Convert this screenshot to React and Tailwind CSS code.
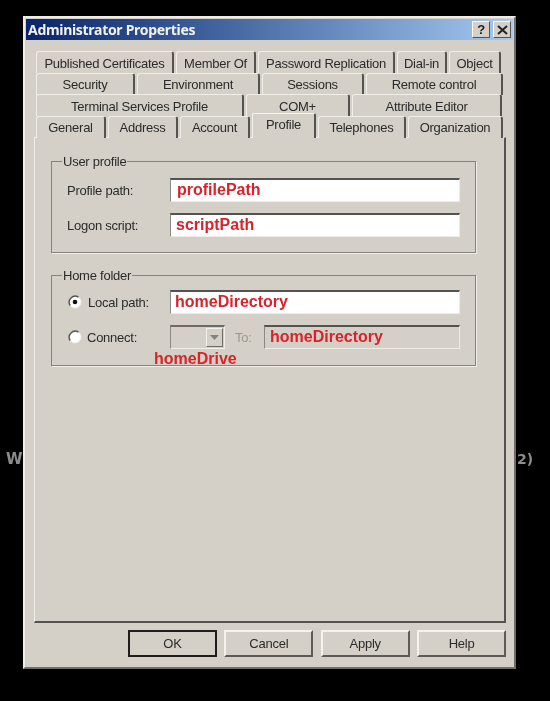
const rows = [
  [["Published Certificates", 138], ["Member Of", 80], ["Password Replication", 137], ["Dial-in", 50], ["Object", 52]],
  [["Security", 99], ["Environment", 123], ["Sessions", 102], ["Remote control", 137]],
  [["Terminal Services Profile", 208], ["COM+", 104], ["Attribute Editor", 150]],
  [["General", 70], ["Address", 70], ["Account", 70], ["Profile", 64, true], ["Telephones", 88], ["Organization", 95]],
];

function Tab({ label, width, active }) {
  return (
    <div
      style={{ width }}
      className={
        active
          ? "relative z-10 -mt-[3px] -mb-[1px] flex h-[25px] shrink-0 items-start justify-center rounded-t-[2px] border-t border-l border-r-2 border-t-[#f4f2ec] border-l-[#f4f2ec] border-r-[#55534f] bg-[#d4d0c8] pt-[4px] text-[#2b2b2b]"
          : "flex h-[22px] shrink-0 items-center justify-center rounded-t-[3px] border-t border-l border-r-2 border-t-[#f0eee8] border-l-[#f0eee8] border-r-[#55534f] bg-[#d4d0c8] pt-[1px] text-[#2b2b2b]"
      }
    >
      {label}
    </div>
  );
}

function Field({ text, width, disabled, pad = "pl-[4px]" }) {
  return (
    <div
      style={{ width }}
      className={`flex h-[24px] shrink-0 items-center border-t-2 border-l border-r border-b border-t-[#55534f] border-l-[#8b8984] border-r-[#eeece6] border-b-[#eeece6] pb-[1px] ${pad} text-[16px] font-bold tracking-normal text-[#d8232a] ${disabled ? "bg-[#d4d0c8]" : "bg-white"}`}
    >
      {text}
    </div>
  );
}

function Radio({ checked }) {
  return (
    <svg width="14" height="14" viewBox="0 0 14 14" className="shrink-0">
      <circle cx="7" cy="7" r="6" fill="#fff" stroke="#f0eee8" />
      <path d="M2.2 10.5A6 6 0 0 1 10.5 2.2" fill="none" stroke="#55534f" strokeWidth="1.4" />
      {checked && <circle cx="7" cy="7" r="2.3" fill="#111" />}
    </svg>
  );
}

function Group({ title, className, children }) {
  return (
    <fieldset className={`ml-[16px] w-[425px] border border-[#85837e] pb-0 pl-0 pr-0 pt-0 shadow-[1px_1px_0_#f0eee8] ${className}`}>
      <legend className="ml-[10px] px-[1px] text-[#2b2b2b]">{title}</legend>
      {children}
    </fieldset>
  );
}

function Button({ label, primary, width = 89 }) {
  return (
    <div
      style={{ width }}
      className={
        primary
          ? "flex h-[27px] shrink-0 items-center justify-center border-2 border-[#1f1e1c] bg-[#d4d0c8] text-[#2b2b2b]"
          : "flex h-[27px] shrink-0 items-center justify-center border-t-2 border-l-2 border-r-2 border-b-2 border-t-[#f4f2ec] border-l-[#f4f2ec] border-r-[#5d5b56] border-b-[#5d5b56] bg-[#d4d0c8] text-[#2b2b2b]"
      }
    >
      {label}
    </div>
  );
}

export default function App() {
  return (
    <div className="flex h-[701px] w-[550px] overflow-hidden bg-black pt-[16px] font-['Liberation_Sans',sans-serif] text-[13px] leading-none tracking-[-0.25px] blur-[0.45px]">
      <div className="w-[23px] shrink-0 pl-[6px] pt-[436px] font-['DejaVu_Sans',sans-serif] text-[15px] font-bold tracking-normal text-[#8d8d8d]">W</div>

      <div className="h-[653px] w-[493px] shrink-0 border-t-2 border-l-2 border-r-2 border-b-2 border-t-[#eeece6] border-l-[#eeece6] border-r-[#6f6d68] border-b-[#6f6d68] bg-[#d4d0c8] p-[1px]">
        <div className="flex h-[21px] items-center justify-between bg-gradient-to-r from-[#0a246a] to-[#a6caf0] pl-[2px] pr-[2px]">
          <span className="font-['Noto_Sans',sans-serif] text-[14px] font-bold tracking-[-0.3px] text-[#f2f2f2]">Administrator Properties</span>
          <div className="flex gap-[3px]">
            <div className="flex h-[17px] w-[18px] items-center justify-center border border-t-[#fff] border-l-[#fff] border-r-[#55534f] border-b-[#55534f] bg-[#d4d0c8] text-[13px] font-bold text-[#222]">?</div>
            <div className="flex h-[17px] w-[18px] items-center justify-center border border-t-[#fff] border-l-[#fff] border-r-[#55534f] border-b-[#55534f] bg-[#d4d0c8] text-[#222]">
              <svg width="11" height="10" viewBox="0 0 11 10"><path d="M1 1l9 8M10 1l-9 8" stroke="#222" strokeWidth="2" /></svg>
            </div>
          </div>
        </div>

        <div className="pl-[8px] pr-[7px] pt-[11px]">
          <div className="flex flex-col pl-[2px]">
            {rows.map((row, i) => (
              <div key={i} className="flex h-[21.5px] gap-[2px]">
                {row.map(([label, w, active]) => (
                  <Tab key={label} label={label} width={w} active={active} />
                ))}
              </div>
            ))}
          </div>

          <div className="h-[486px] w-[472px] border-t border-l border-r-2 border-b-2 border-t-[#f0eee8] border-l-[#f0eee8] border-r-[#55534f] border-b-[#55534f] pt-[17px]">
            <Group title="User profile" className="h-[98px]">
              <div className="mt-[10px] flex h-[24px] items-center pl-[15px]">
                <span className="w-[103px] text-[#2b2b2b]">Profile path:</span>
                <Field text="profilePath" width={290} pad="pl-[6px]" />
              </div>
              <div className="mt-[11px] flex h-[24px] items-center pl-[15px]">
                <span className="w-[103px] text-[#2b2b2b]">Logon script:</span>
                <Field text="scriptPath" width={290} pad="pl-[5px]" />
              </div>
            </Group>

            <Group title="Home folder" className="mt-[16px] h-[97px]">
              <div className="mt-[8px] flex h-[24px] items-center pl-[16px]">
                <Radio checked />
                <span className="ml-[6px] w-[82px] text-[#2b2b2b]">Local path:</span>
                <Field text="homeDirectory" width={290} />
              </div>
              <div className="mt-[11px] flex h-[24px] items-center pl-[16px]">
                <Radio />
                <span className="ml-[5px] w-[83px] text-[#2b2b2b]">Connect:</span>
                <div className="flex h-[24px] w-[55px] shrink-0 items-center justify-end border-t-2 border-l border-r border-b border-t-[#6d6b66] border-l-[#8b8984] border-r-[#f0eee8] border-b-[#f0eee8] pr-[1px]">
                  <div className="flex h-[19px] w-[17px] items-center justify-center border border-t-[#f4f2ec] border-l-[#f4f2ec] border-r-[#6d6b66] border-b-[#6d6b66]">
                    <svg width="9" height="5" viewBox="0 0 9 5"><path d="M0 0h9L4.500 5z" fill="#85837e" /></svg>
                  </div>
                </div>
                <span className="ml-[10px] w-[29px] text-[#9a9892]">To:</span>
                <Field text="homeDirectory" width={196} disabled pad="pl-[5px]" />
              </div>
              <div className="relative z-10 mt-[1px] ml-[102px] text-[16px] font-bold leading-[18px] tracking-normal text-[#d8232a]">homeDrive</div>
            </Group>
          </div>

          <div className="flex justify-end gap-[7.33px] pt-[7px]">
            <Button label="OK" primary />
            <Button label="Cancel" />
            <Button label="Apply" />
            <Button label="Help" />
          </div>
        </div>
      </div>

      <div className="pl-[1px] pt-[436px] font-['DejaVu_Sans',sans-serif] text-[14px] font-bold tracking-normal text-[#8d8d8d]">2)</div>
    </div>
  );
}
